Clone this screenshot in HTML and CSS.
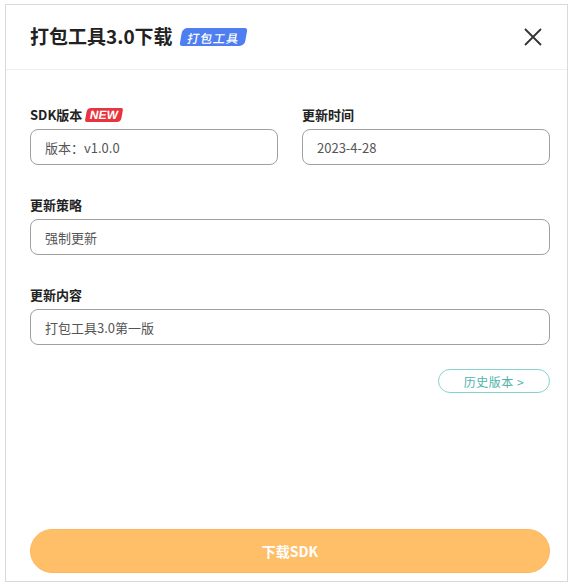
FILE: index.html
```html
<!DOCTYPE html>
<html lang="zh-CN">
<head>
<meta charset="utf-8">
<link rel="stylesheet" href="styles.css">
</head>
<body>
<div class="modal">
  <div class="modal-header">
    <div class="title">打包工具3.0下载</div>
    <span class="tag-blue"><span>打包工具</span></span>
    <button class="close" aria-label="关闭">
      <svg width="18" height="18" viewBox="0 0 18 18"><path d="M1 1L17 17M17 1L1 17" stroke="#333" stroke-width="1.8" fill="none"/></svg>
    </button>
  </div>
  <div class="modal-body">
    <div class="row">
      <div class="field">
        <div class="label">SDK版本 <span class="tag-new">NEW</span></div>
        <div class="input">版本：v1.0.0</div>
      </div>
      <div class="field">
        <div class="label">更新时间</div>
        <div class="input">2023-4-28</div>
      </div>
    </div>
    <div class="field">
      <div class="label">更新策略</div>
      <div class="input">强制更新</div>
    </div>
    <div class="field">
      <div class="label">更新内容</div>
      <div class="input">打包工具3.0第一版</div>
    </div>
    <div class="history-row">
      <button class="history">历史版本 &gt;</button>
    </div>
    <button class="download">下载SDK</button>
  </div>
</div>
</body>
</html>
```
FILE: styles.css
```css
* { box-sizing: border-box; }
html, body { margin: 0; padding: 0; background: #fff; }
body {
  font-family: "Noto Sans CJK SC", "Noto Sans", sans-serif;
  color: #222;
  padding: 4px 5px 5px 5px;
}
.modal {
  width: 563px;
  height: 578px;
  border: 1px solid #d9d9d9;
  display: flex;
  flex-direction: column;
  background: #fff;
}
.modal-header {
  height: 65px;
  border-bottom: 1px solid #eeeeee;
  display: flex;
  align-items: center;
  padding: 0 24px 0 24px;
}
.title {
  font-size: 19px;
  font-weight: 700;
  color: #222;
  line-height: 24px;
  padding-bottom: 2px;
}
.tag-blue {
  margin-left: 8px;
  display: inline-flex;
  align-items: center;
  justify-content: center;
  height: 18px;
  width: 65px;
  background: #4f7ef0;
  border-radius: 5px 3px 5px 3px;
  transform: skewX(-10deg);
  color: #fff;
  font-size: 12px;
  font-weight: 500;
  letter-spacing: 1px;
  margin-bottom: 1px;
}
.close {
  margin-left: auto;
  border: 0;
  background: none;
  padding: 0;
  width: 18px;
  height: 18px;
  margin-right: 1px;
  display: flex;
  cursor: pointer;
}
.modal-body {
  flex: 1;
  display: flex;
  flex-direction: column;
  padding: 35px 17px 8px 24px;
}
.row {
  display: flex;
  gap: 24px;
}
.row .field { flex: 1; }
.field { margin-bottom: 30px; }
.label {
  font-size: 13px;
  font-weight: 700;
  line-height: 20px;
  height: 20px;
  margin-bottom: 4px;
  display: flex;
  align-items: center;
  color: #222;
}
.tag-new {
  margin-left: 4px;
  display: inline-flex;
  align-items: center;
  justify-content: center;
  height: 14px;
  width: 36px;
  background: #e8343e;
  border-radius: 4px 2px 4px 2px;
  transform: skewX(-10deg);
  color: #fff;
  font-family: "Liberation Sans", Arial, sans-serif;
  font-size: 12px;
  font-weight: 700;
  line-height: 14px;
}
.input {
  height: 36px;
  border: 1px solid #a0a0a0;
  border-radius: 8px;
  padding: 0 14px;
  display: flex;
  align-items: center;
  font-size: 13px;
  color: #555;
}
.history-row {
  display: flex;
  justify-content: flex-end;
  margin-top: -6px;
}
.history {
  width: 112px;
  height: 24px;
  border: 1px solid #84d3cd;
  border-radius: 12px;
  background: #fff;
  color: #4fb3ab;
  font-family: "Noto Sans CJK SC", sans-serif;
  font-size: 12px;
  padding: 0;
  letter-spacing: 0.5px;
}
.download {
  margin-top: auto;
  height: 44px;
  width: 100%;
  border: 1px solid #ffb861;
  border-radius: 22px;
  background: #ffbe68;
  color: #fff;
  font-family: "Noto Sans CJK SC", sans-serif;
  font-size: 14px;
  font-weight: 700;
}
```
